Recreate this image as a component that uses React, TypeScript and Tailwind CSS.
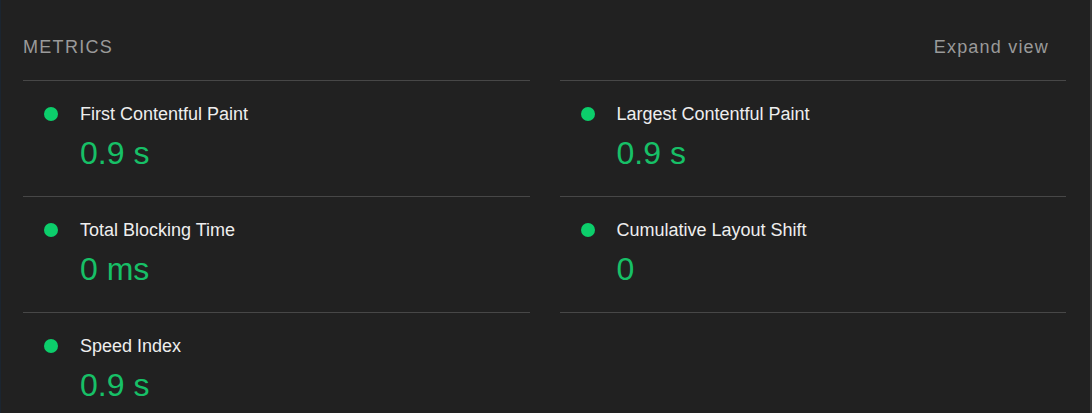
import React from "react";

type Metric = { label: string; value: string } | null;

const metrics: Metric[] = [
  { label: "First Contentful Paint", value: "0.9 s" },
  { label: "Largest Contentful Paint", value: "0.9 s" },
  { label: "Total Blocking Time", value: "0 ms" },
  { label: "Cumulative Layout Shift", value: "0" },
  { label: "Speed Index", value: "0.9 s" },
  null,
];

export default function App() {
  return (
    <div
      className="w-[1092px] h-[413px] overflow-hidden bg-[#212121] border-l border-l-[#1b2530] border-r-2 border-r-[#3b3b3b]"
      style={{ fontFamily: '"Liberation Sans", Arial, sans-serif' }}
    >
      <div className="pl-[22px] pr-[24px]">
        <div className="flex items-start justify-between pt-[35px] pb-[21px] leading-[24px] text-[18px]">
          <div className="text-[#9a9a9a] uppercase tracking-[1.3px]">Metrics</div>
          <div className="text-[#9a9a9a] pr-[17px] tracking-[1.2px]">Expand view</div>
        </div>
        <div className="grid grid-cols-2 gap-x-[30px]">
          {metrics.map((m, i) => (
            <div key={i} className="border-t border-[#474747] h-[116px]">
              {m && (
                <div className="flex pt-[21px] pl-[21px]">
                  <div className="h-[24px] flex items-center">
                    <div className="w-[14px] h-[14px] rounded-full bg-[#0cce6b]" />
                  </div>
                  <div className="ml-[22px] flex flex-col">
                    <div className="text-[18px] leading-[24px] text-[#eeeeee]">{m.label}</div>
                    <div className="mt-[7px] text-[32px] leading-[40px] text-[#17c067]">{m.value}</div>
                  </div>
                </div>
              )}
            </div>
          ))}
        </div>
      </div>
    </div>
  );
}
